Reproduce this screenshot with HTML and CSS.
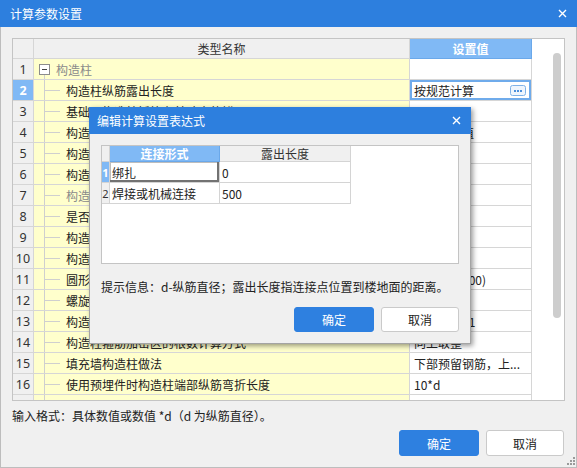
FILE: index.html
```html
<!DOCTYPE html>
<html lang="zh-CN">
<head>
<meta charset="utf-8">
<title>计算参数设置</title>
<link rel="stylesheet" href="styles.css">
</head>
<body>
<div class="win">
  <div class="titlebar">
    <span class="title">计算参数设置</span>
    <svg class="xicon" width="9" height="9" viewBox="0 0 9 9"><path d="M1 1L8 8M8 1L1 8" stroke="#fff" stroke-width="1.4"/></svg>
  </div>
  <div class="body">
    <div class="gridbox">
      <div class="grid">
        <div class="row head"><div class="c num"></div><div class="c name">类型名称</div><div class="c val hl">设置值</div></div>
        <div class="row"><div class="c num">1</div><div class="c name root"><span class="minus"></span>构造柱</div><div class="c val"></div></div>
        <div class="row"><div class="c num sel">2</div><div class="c name child">构造柱纵筋露出长度</div><div class="c val edit"><span>按规范计算</span><svg class="more" width="16" height="11" viewBox="0 0 16 11"><rect x="0.5" y="0.5" width="15" height="10" rx="2" fill="#eef5fd" stroke="#7fb2e8"/><rect x="4" y="5" width="2" height="2" fill="#4a8fdc"/><rect x="7" y="5" width="2" height="2" fill="#4a8fdc"/><rect x="10" y="5" width="2" height="2" fill="#4a8fdc"/></svg></div></div>
        <div class="row"><div class="c num">3</div><div class="c name child">基础层构造柱插筋在基础内的锚固</div><div class="c val"></div></div>
        <div class="row"><div class="c num">4</div><div class="c name child">构造柱纵筋锚固长度</div><div class="c val">按规范取值</div></div>
        <div class="row"><div class="c num">5</div><div class="c name child">构造柱根部箍筋加密区范围</div><div class="c val">500</div></div>
        <div class="row"><div class="c num">6</div><div class="c name child">构造柱箍筋加密间距</div><div class="c val">100</div></div>
        <div class="row"><div class="c num">7</div><div class="c name child dim">构造柱箍筋非加密间距</div><div class="c val">200</div></div>
        <div class="row"><div class="c num">8</div><div class="c name child">是否按框架柱计算</div><div class="c val">否</div></div>
        <div class="row"><div class="c num">9</div><div class="c name child">构造柱纵筋搭接接头错开百分率</div><div class="c val">50%</div></div>
        <div class="row"><div class="c num">10</div><div class="c name child">构造柱箍筋、拉筋弯勾角度</div><div class="c val">135°</div></div>
        <div class="row"><div class="c num">11</div><div class="c name child">圆形箍筋的搭接长度</div><div class="c val">max(lae,300)</div></div>
        <div class="row"><div class="c num">12</div><div class="c name child">螺旋箍是否连续通过</div><div class="c val">是</div></div>
        <div class="row"><div class="c num">13</div><div class="c name child">构造柱箍筋根数计算方式</div><div class="c val">向上取整+1</div></div>
        <div class="row"><div class="c num">14</div><div class="c name child">构造柱箍筋加密区的根数计算方式</div><div class="c val">向上取整</div></div>
        <div class="row"><div class="c num">15</div><div class="c name child">填充墙构造柱做法</div><div class="c val">下部预留钢筋，上...</div></div>
        <div class="row"><div class="c num">16</div><div class="c name child">使用预埋件时构造柱端部纵筋弯折长度</div><div class="c val">10*d</div></div>
        <div class="row"><div class="c num">17</div><div class="c name child">构造柱植筋锚固深度</div><div class="c val">10*d</div></div>
      </div>
      <div class="vscroll"><div class="thumb"></div></div>
    </div>
    <div class="note">输入格式：具体数值或数值 *d（d 为纵筋直径）。</div>
    <div class="actions">
      <button class="btn primary">确定</button>
      <button class="btn">取消</button>
    </div>
  </div>
  <svg class="grip" width="10" height="10" viewBox="0 0 10 10"><rect x="8" y="2" width="2" height="2" fill="#9a9a9a"/><rect x="5" y="5" width="2" height="2" fill="#9a9a9a"/><rect x="8" y="5" width="2" height="2" fill="#9a9a9a"/><rect x="2" y="8" width="2" height="2" fill="#9a9a9a"/><rect x="5" y="8" width="2" height="2" fill="#9a9a9a"/><rect x="8" y="8" width="2" height="2" fill="#9a9a9a"/></svg>

  <div class="dialog">
    <div class="dlg-title">
      <span class="title">编辑计算设置表达式</span>
      <svg class="xicon" width="9" height="9" viewBox="0 0 9 9"><path d="M1 1L8 8M8 1L1 8" stroke="#fff" stroke-width="1.4"/></svg>
    </div>
    <div class="dlg-body">
      <div class="ibox">
        <div class="irow ihead"><div class="ic inum"></div><div class="ic hl">连接形式</div><div class="ic">露出长度</div></div>
        <div class="irow"><div class="ic inum sel">1</div><div class="ic cell editing">绑扎</div><div class="ic cell">0</div></div>
        <div class="irow"><div class="ic inum">2</div><div class="ic cell">焊接或机械连接</div><div class="ic cell">500</div></div>
      </div>
      <div class="hint">提示信息：d-纵筋直径；露出长度指连接点位置到楼地面的距离。</div>
      <div class="dlg-actions">
        <button class="btn primary small">确定</button>
        <button class="btn small">取消</button>
      </div>
    </div>
  </div>
</div>
</body>
</html>
```

FILE: styles.css
```css
html, body {
  margin: 0;
  padding: 0;
  background: #ffffff;
}

body {
  font-family: "Noto Sans CJK SC", "Noto Sans", sans-serif;
  font-size: 12px;
  color: #222222;
}

.win {
  width: 577px;
  height: 468px;
  position: relative;
  background: #f0f0f0;
  display: flex;
  flex-direction: column;
  overflow: hidden;
}

.titlebar {
  height: 27px;
  flex: none;
  background: #2d7fde;
  color: #ffffff;
  display: flex;
  align-items: center;
  justify-content: space-between;
  padding: 0 10px 0 10px;
}

.title {
  font-size: 12px;
  line-height: 27px;
}

.xicon {
  display: block;
}

.body {
  flex: 1;
  border: 1px solid #bdbdbd;
  border-top: none;
  padding: 11px 11px 11px 11px;
  display: flex;
  flex-direction: column;
}

.gridbox {
  height: 363px;
  flex: none;
  box-sizing: border-box;
  border: 1px solid #c4c4c4;
  background: #ffffff;
  display: flex;
  overflow: hidden;
}

.grid {
  width: 519px;
  flex: none;
}

.row {
  display: grid;
  grid-template-columns: 21px 376px 122px;
  height: 21px;
}

.row.head {
  height: 20px;
}

.c {
  box-sizing: border-box;
  border-right: 1px solid #d6d6d6;
  border-bottom: 1px solid #d6d6d6;
  display: flex;
  align-items: center;
  white-space: nowrap;
  overflow: hidden;
}

.num {
  justify-content: center;
  background: #f0f0f0;
  color: #333333;
  font-family: "Noto Sans", "Open Sans", sans-serif;
  font-size: 12.5px;
}

.num.sel {
  background: #80b9f5;
  color: #ffffff;
  font-weight: bold;
}

.name {
  background: #ffffcc;
}

.val {
  background: #ffffff;
  padding-left: 4px;
}

.head .c {
  background: #f0f0f0;
  justify-content: center;
  color: #333333;
  padding: 0;
}

.head .c.hl {
  background: #80b9f5;
  color: #ffffff;
  font-weight: bold;
  border-right-color: #6aa8ea;
  border-bottom-color: #6aa8ea;
}

.root {
  padding-left: 5px;
  color: #8a8a8a;
  background:
    linear-gradient(#cfcfcf, #cfcfcf) 10px 16px / 1px 100% no-repeat,
    #ffffcc;
}

.minus {
  width: 11px;
  height: 11px;
  box-sizing: border-box;
  border: 1px solid #8c8c8c;
  margin-right: 6px;
  background:
    linear-gradient(#444444, #444444) center / 5px 1px no-repeat,
    #ffffff;
}

.child {
  padding-left: 32px;
  background:
    linear-gradient(#cfcfcf, #cfcfcf) 10px 0 / 1px 100% no-repeat,
    linear-gradient(#cfcfcf, #cfcfcf) 11px 10px / 15px 1px no-repeat,
    #ffffcc;
}

.dim {
  color: #8a8a8a;
}

.val.edit {
  justify-content: space-between;
  padding-right: 5px;
  box-shadow: inset 0 0 0 2px #6fabeb;
}

.more {
  display: block;
}

.vscroll {
  flex: 1;
  background: #ffffff;
  padding: 14px 3px 0 21px;
}

.thumb {
  width: 8px;
  height: 265px;
  border-radius: 4px;
  background: #cdcdcd;
}

.note {
  margin-top: 6px;
  height: 18px;
  line-height: 18px;
  color: #222222;
}

.actions {
  margin-top: 5px;
  display: flex;
  justify-content: flex-end;
  gap: 7px;
  padding-right: 1px;
}

.btn {
  height: 26px;
  width: 78px;
  box-sizing: border-box;
  border: 1px solid #cacaca;
  border-radius: 3px;
  background: #ffffff;
  color: #222222;
  font-family: inherit;
  font-size: 12px;
  padding: 0;
}

.btn.primary {
  width: 80px;
  background: #2e80e0;
  border-color: #2e80e0;
  color: #ffffff;
}

.btn.small {
  height: 25px;
}

.grip {
  position: absolute;
  right: 2px;
  bottom: 3px;
}

/* dialog */
.dialog {
  position: absolute;
  left: 89px;
  top: 107px;
  width: 382px;
  height: 237px;
  display: flex;
  flex-direction: column;
  background: #f0f0f0;
  box-shadow: 2px 2px 5px rgba(0, 0, 0, 0.4);
}

.dlg-title {
  height: 27px;
  flex: none;
  background: #2d7fde;
  color: #ffffff;
  display: flex;
  align-items: center;
  justify-content: space-between;
  padding: 0 10px 0 8px;
}

.dlg-body {
  flex: 1;
  border: 1px solid #a4a4a4;
  border-top: none;
  padding: 11px 11px 11px 11px;
  display: flex;
  flex-direction: column;
}

.ibox {
  height: 119px;
  flex: none;
  box-sizing: border-box;
  border: 1px solid #c4c4c4;
  background: #ffffff;
}

.irow {
  display: grid;
  grid-template-columns: 8px 110px 131px;
  height: 21px;
}

.irow.ihead {
  height: 16px;
}

.ic {
  box-sizing: border-box;
  border-right: 1px solid #d4d4d4;
  border-bottom: 1px solid #d4d4d4;
  display: flex;
  align-items: center;
  white-space: nowrap;
  overflow: hidden;
}

.ihead .ic {
  justify-content: center;
  background: #f0f0f0;
  color: #333333;
}

.ihead .ic.hl {
  background: #80b9f5;
  color: #ffffff;
  font-weight: bold;
  border-right-color: #6aa8ea;
  border-bottom-color: #6aa8ea;
}

.inum {
  justify-content: center;
  background: #f0f0f0;
  color: #333333;
  font-family: "Noto Sans", sans-serif;
  font-size: 11px;
}

.inum.sel {
  background: #80b9f5;
  color: #ffffff;
  font-weight: bold;
}

.cell {
  padding-left: 2px;
}

.cell.editing {
  box-shadow: inset -2px -2px 0 #727272, inset 1px 1px 0 #bdbdbd;
}

.hint {
  margin-top: 14px;
  height: 18px;
  line-height: 18px;
  color: #222222;
}

.dlg-actions {
  margin-top: 11px;
  display: flex;
  justify-content: flex-end;
  gap: 7px;
}
```
